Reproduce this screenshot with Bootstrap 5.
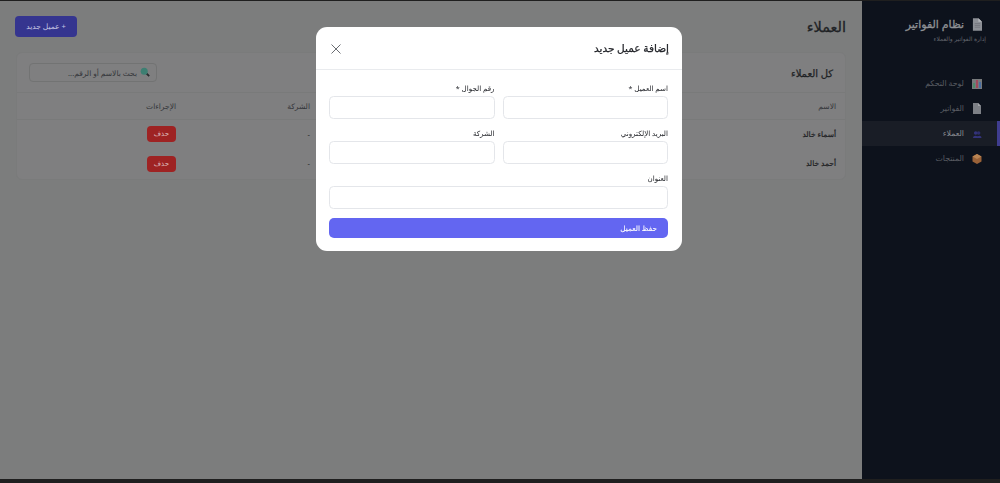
<!DOCTYPE html>
<html lang="ar" dir="rtl">
<head>
<meta charset="utf-8">
<title>العملاء</title>
<link href="https://cdn.jsdelivr.net/npm/bootstrap@5.3.0/dist/css/bootstrap.min.css" rel="stylesheet">
<style>
html,body{height:100%;overflow:hidden}
body{font-family:"Noto Sans","DejaVu Sans",sans-serif;background:#1f1f1f;color:#1c1d1f;font-size:8px;padding:1px 0 4px}
.app-shell{height:100%;background:#7c7d7d}
.side-pane{width:138px;flex:none;background:#0d121c;padding-top:14px;color:#77797e}
.brand-box{padding:0 18px 0 0;height:56px}
.brand-name{font-size:11px;font-weight:400;-webkit-text-stroke:.3px;line-height:18px;color:#8f9195;margin:0 0 2px}
.brand-sub{font-size:6px;line-height:9px;color:#63666c;margin:0 -4px 0 0}
.side-link{height:25px;padding:0 15px 0 0;font-size:7.8px;color:#5a5d63;border-right:3px solid transparent;text-decoration:none}
.side-link.on{background:#191d26;border-right-color:#3f3d8f;color:#8a8c92}
.main-pane{padding:15px 16px;min-width:0}
.page-head{height:21px;margin-bottom:15px}
.page-title{font-size:14.5px;font-weight:400;-webkit-text-stroke:.3px;margin:0;line-height:21px;color:#202225}
.add-btn{background:#35358f;color:#c4c4e2;border:0;border-radius:4px;font-size:7.5px;height:21px;width:62px;padding:0;margin-left:-1px}
.list-card{background:#7f7f80;border:1px solid #7a7b7b;border-radius:6px;overflow:hidden}
.list-head{height:40px;padding:0 12px 0 12px;border-bottom:1px solid #797a7a}
.list-title{font-size:10px;font-weight:400;-webkit-text-stroke:.25px;margin:0;color:#202225}
.find-box{width:128px;height:19px;background:#7f7f80;border:1px solid #727373;border-radius:4px;font-size:7.5px;padding:0 19px 0 6px;color:#2a2b2d;box-shadow:none}
.find-box::placeholder{color:#34363a;opacity:1}
.find-wrap{width:128px}
.find-ico{position:absolute;right:7px;top:4px;width:10px;height:10px}
.cust-table{margin:0;font-size:7.5px;--bs-table-bg:transparent;--bs-table-color:#1c1d1f;table-layout:fixed}
.cust-table th{font-weight:400;color:#34363a;height:26px;padding:1px 9px 0;vertical-align:middle;border-bottom:1px solid #797a7a}
.cust-table td{height:30px;padding:0 9px;vertical-align:middle;border-bottom:0}
.cust-table td.who{-webkit-text-stroke:.2px}
.del-btn{background:#9e2323;color:#dcbcbc;border:0;border-radius:4px;font-size:7px;height:16px;width:29px;padding:0;display:block}
.modal-backdrop.show{opacity:1;background:transparent;backdrop-filter:blur(.72px)}
.modal-dialog.cust-dialog{width:366px;max-width:366px;margin:27px auto 0 316px}
.cust-dialog .modal-content{border:0;border-radius:11px;color:#23252a}
.cust-dialog .modal-header{height:43px;padding:1px 13px 0 15px;border-bottom:1px solid #e9ebee}
.cust-dialog .modal-title{font-size:10.5px;font-weight:400;-webkit-text-stroke:.25px;line-height:1}
.x-btn{width:10px;height:10px;padding:0;border:0;background:none;display:block;margin:0}
.x-btn svg{display:block}
.cust-dialog .modal-body{padding:13px 14px 13px 13px}
.field-row{--bs-gutter-x:8px;--bs-gutter-y:0}
.field-lbl{font-size:7.1px;font-weight:400;line-height:10px;margin:0 0 3px;display:block;color:#23252a}
.field-in{height:23px;border:1px solid #e4e6ea;border-radius:4.5px;padding:0 8px;font-size:8px;box-shadow:none;min-height:0}
.field-gap{margin-bottom:9px}
.save-btn{background:#6366f1;color:#fff;border:0;border-radius:5px;height:20px;font-size:7.3px;font-weight:400;-webkit-text-stroke:.1px;padding:0 11px;margin-top:0}
</style>
</head>
<body class="modal-open">
<div class="app-shell d-flex">
  <aside class="side-pane d-flex flex-column order-0">
    <div class="brand-box">
      <h1 class="brand-name d-flex align-items-center gap-2">
        <svg width="10" height="13" viewBox="0 0 11 14"><path d="M1 0h6l4 4v10H1z" fill="#8d9096"/><path d="M7 0l4 4H7z" fill="#b6b8bc"/><path d="M3 6h6M3 8h6M3 10h6" stroke="#6a6c72" stroke-width=".7"/></svg>
        <span>نظام الفواتير</span>
      </h1>
      <p class="brand-sub">إدارة الفواتير والعملاء</p>
    </div>
    <nav class="d-flex flex-column">
      <a class="side-link d-flex align-items-center gap-2" href="#">
        <svg width="10" height="10" viewBox="0 0 10 10"><rect width="10" height="10" fill="#777a7c"/><rect x="1" y="4" width="2" height="5" fill="#4e8a6a"/><rect x="4" y="1" width="2" height="8" fill="#a04a5c"/><rect x="7" y="3" width="2" height="6" fill="#4a6ea0"/></svg>
        <span>لوحة التحكم</span></a>
      <a class="side-link d-flex align-items-center gap-2" href="#">
        <svg width="10" height="11" viewBox="0 0 10 11"><path d="M1 0h5l3 3v8H1z" fill="#7d8086"/><path d="M6 0l3 3H6z" fill="#a3a5a9"/></svg>
        <span>الفواتير</span></a>
      <a class="side-link on d-flex align-items-center gap-2" href="#">
        <svg width="10" height="10" viewBox="0 0 10 10"><circle cx="3.700" cy="4" r="1.800" fill="#33337a"/><circle cx="6.600" cy="4" r="1.800" fill="#2d2d6c"/><path d="M1 9c0-3 5-3 5.400 0zM5 9c.5-3 4.500-3 4.500 0z" fill="#33337a"/></svg>
        <span>العملاء</span></a>
      <a class="side-link d-flex align-items-center gap-2" href="#">
        <svg width="10" height="10" viewBox="0 0 10 10"><path d="M5 0l4.500 2.500v5L5 10 .5 7.500v-5z" fill="#9a6238"/><path d="M5 5l4.500-2.500L5 0 .5 2.500z" fill="#b98453"/></svg>
        <span>المنتجات</span></a>
    </nav>
  </aside>
  <main class="main-pane flex-grow-1 order-1">
    <div class="page-head d-flex justify-content-between align-items-center">
      <h2 class="page-title">العملاء</h2>
      <button class="add-btn" type="button">+ عميل جديد</button>
    </div>
    <section class="list-card">
      <div class="list-head d-flex justify-content-between align-items-center">
        <h3 class="list-title">كل العملاء</h3>
        <div class="find-wrap position-relative">
          <input class="form-control find-box" type="text" placeholder="بحث بالاسم أو الرقم...">
          <svg class="find-ico" viewBox="0 0 10 10"><path d="M6 6l3.200 3.200" stroke="#2a2c2e" stroke-width="1.800"/><circle cx="4.200" cy="4.200" r="3.500" fill="#3d7f72"/></svg>
        </div>
      </div>
      <table class="table cust-table">
        <colgroup><col style="width:180px"><col style="width:170px"><col style="width:176px"><col style="width:134px"><col></colgroup>
        <thead><tr><th>الاسم</th><th>رقم الجوال</th><th>البريد الإلكتروني</th><th>الشركة</th><th>الإجراءات</th></tr></thead>
        <tbody>
          <tr><td class="who">أسماء خالد</td><td></td><td></td><td>-</td><td><button class="del-btn" type="button">حذف</button></td></tr>
          <tr><td class="who">أحمد خالد</td><td></td><td></td><td>-</td><td><button class="del-btn" type="button">حذف</button></td></tr>
        </tbody>
      </table>
    </section>
  </main>
</div>
<div class="modal-backdrop show"></div>
<div class="modal d-block" tabindex="-1">
  <div class="modal-dialog cust-dialog">
    <div class="modal-content">
      <div class="modal-header d-flex justify-content-between align-items-center">
        <h5 class="modal-title">إضافة عميل جديد</h5>
        <button class="x-btn" type="button" aria-label="إغلاق"><svg width="10" height="10" viewBox="0 0 10 10"><path d="M.5.5l9 9M9.500.5l-9 9" stroke="#6a6d72" stroke-width="1" fill="none"/></svg></button>
      </div>
      <div class="modal-body">
        <form>
          <div class="row field-row field-gap">
            <div class="col-6"><label class="field-lbl">اسم العميل *</label><input class="form-control field-in" type="text"></div>
            <div class="col-6"><label class="field-lbl">رقم الجوال *</label><input class="form-control field-in" type="text"></div>
          </div>
          <div class="row field-row field-gap">
            <div class="col-6"><label class="field-lbl">البريد الإلكتروني</label><input class="form-control field-in" type="text"></div>
            <div class="col-6"><label class="field-lbl">الشركة</label><input class="form-control field-in" type="text"></div>
          </div>
          <div class="field-gap"><label class="field-lbl">العنوان</label><input class="form-control field-in" type="text"></div>
          <button class="btn save-btn w-100 d-block text-end" type="button">حفظ العميل</button>
        </form>
      </div>
    </div>
  </div>
</div>
<script src="https://cdn.jsdelivr.net/npm/bootstrap@5.3.0/dist/js/bootstrap.bundle.min.js"></script>
</body>
</html>
